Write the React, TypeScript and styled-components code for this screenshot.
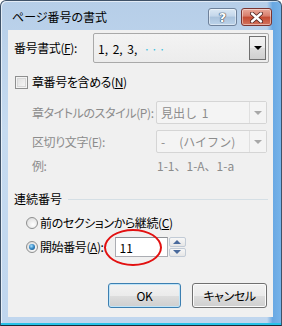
import React from "react";
import styled, { createGlobalStyle } from "styled-components";

const GlobalStyle = createGlobalStyle`
  html, body {
    margin: 0;
    padding: 0;
    background: #ffffff;
  }
  * {
    box-sizing: border-box;
  }
`;

const font = `"Noto Sans CJK JP", "Liberation Sans", sans-serif`;

const Window = styled.div`
  width: 282px;
  height: 326px;
  border: 1px solid #3f5268;
  border-bottom-color: #1c2a38;
  border-radius: 6px 6px 0 0;
  background:
    linear-gradient(to right, rgba(255, 255, 255, 0) 0%, rgba(255, 255, 255, 0) 95%, rgba(90, 160, 225, 0.85) 97%, rgba(110, 175, 232, 0.9) 100%),
    linear-gradient(to bottom, #b6cee8 0%, #c6dbf0 40%, #c0d6ee 100%);
  box-shadow: inset 0 -2px 0 #27c2e8, inset 1px 1px 0 rgba(255, 255, 255, 0.6);
  display: flex;
  flex-direction: column;
  font-family: ${font};
  overflow: hidden;
`;

const TitleBar = styled.div`
  height: 29px;
  display: flex;
  align-items: flex-start;
  padding: 6px 9px 0 11px;
`;

const Title = styled.div`
  flex: 1;
  font-size: 12px;
  line-height: 18px;
  color: #000;
  margin-top: 1px;
  font-feature-settings: "palt";
`;

const CaptionButtons = styled.div`
  display: flex;
  gap: 4px;
  margin-top: 1px;
`;

const CaptionButton = styled.div<{ $kind: "help" | "close" }>`
  width: ${({ $kind }) => ($kind === "help" ? "29px" : "31px")};
  height: 18px;
  border-radius: 3px;
  border: 1px solid ${({ $kind }) => ($kind === "help" ? "#6e819a" : "#7a3430")};
  background: ${({ $kind }) =>
    $kind === "help"
      ? "linear-gradient(#dce8f4 0%, #c3d6ea 45%, #a9c2dc 50%, #bcd3ea 100%)"
      : "linear-gradient(#e9a99b 0%, #d77d6b 45%, #c44a32 50%, #d3735c 100%)"};
  box-shadow: inset 0 0 0 1px rgba(255, 255, 255, 0.45);
  display: flex;
  align-items: center;
  justify-content: center;
  color: #fff;
  font-family: "DejaVu Sans", sans-serif;
  font-weight: bold;
  font-size: 13px;
  text-shadow: 0 0 1px #2d3d52, 0 0 1px #2d3d52, 0 0 1px #2d3d52;
`;

const Client = styled.div`
  flex: 1;
  margin: 0 8px 0 7px;
  background: #f0f0f0;
  display: flex;
  flex-direction: column;
  padding: 3px 0 0 6px;
  font-size: 12px;
  color: #000;
`;

const BottomFrame = styled.div`
  height: 8px;
`;

const Row = styled.div<{ $h: number; $mt: number; $indent?: number; $mr?: number }>`
  display: flex;
  align-items: center;
  height: ${({ $h }) => $h}px;
  margin-top: ${({ $mt }) => $mt}px;
  padding-left: ${({ $indent }) => $indent ?? 0}px;
  padding-right: ${({ $mr }) => $mr ?? 0}px;
  position: relative;
`;

const Label = styled.span<{ $w?: number; $disabled?: boolean; $plain?: boolean }>`
  width: ${({ $w }) => ($w ? `${$w}px` : "auto")};
  flex: none;
  color: ${({ $disabled }) => ($disabled ? "#8c8c8c" : "#000")};
  line-height: 16px;
  white-space: nowrap;
  font-feature-settings: ${({ $plain }) => ($plain ? "normal" : '"palt"')};
  letter-spacing: ${({ $plain }) => ($plain ? "0" : "-0.4px")};
`;

const Key = styled.span`
  text-decoration: underline;
  text-underline-offset: 1px;
`;

const Combo = styled.div<{ $disabled?: boolean }>`
  flex: 1;
  height: 100%;
  display: flex;
  align-items: stretch;
  border: 1px solid ${({ $disabled }) => ($disabled ? "#d5d5d5" : "#a9a9a9")};
  border-radius: 2px;
  background: ${({ $disabled }) =>
    $disabled ? "#f4f4f4" : "linear-gradient(#f3f3f3, #ececec)"};
  padding: ${({ $disabled }) => ($disabled ? "0" : "2px")};
`;

const ComboText = styled.div<{ $disabled?: boolean }>`
  flex: 1;
  display: flex;
  align-items: center;
  padding-left: ${({ $disabled }) => ($disabled ? "4px" : "2px")};
  color: ${({ $disabled }) => ($disabled ? "#8c8c8c" : "#000")};
  white-space: pre;
  word-spacing: 2px;
`;

const Dots = styled.span`
  color: #39c0e0;
  margin-left: 6px;
  letter-spacing: 1px;
`;

const DropButton = styled.div<{ $disabled?: boolean }>`
  width: 17px;
  display: flex;
  align-items: center;
  justify-content: center;
  border: 1px solid ${({ $disabled }) => ($disabled ? "#e0e0e0" : "#707070")};
  border-width: ${({ $disabled }) => ($disabled ? "0 0 0 1px" : "1px")};
  background: ${({ $disabled }) =>
    $disabled ? "#f4f4f4" : "linear-gradient(#f2f2f2 0%, #ebebeb 50%, #dddddd 51%, #cfcfcf 100%)"};
`;

const Arrow = styled.span<{ $disabled?: boolean; $up?: boolean; $color?: string }>`
  width: 0;
  height: 0;
  border-left: 4px solid transparent;
  border-right: 4px solid transparent;
  ${({ $up, $disabled, $color }) =>
    $up
      ? `border-bottom: 4px solid ${$color ?? "#000"};`
      : `border-top: 4px solid ${$color ?? ($disabled ? "#a8a8a8" : "#000")};`}
`;

const Checkbox = styled.span`
  width: 13px;
  height: 13px;
  margin: 0 4px 0 1px;
  border: 1px solid #8e8f8f;
  background: linear-gradient(135deg, #dcdcdc, #fafafa);
  box-shadow: inset 0 0 0 1px #f4f4f4, inset 0 0 0 2px #d8d8d8;
  flex: none;
`;

const Radio = styled.span<{ $checked?: boolean }>`
  width: 12px;
  height: 12px;
  margin: 0 2px 0 12px;
  border-radius: 50%;
  border: 1px solid #8e8f8f;
  background: radial-gradient(circle at 60% 65%, #ffffff, #d6d6d6);
  display: flex;
  align-items: center;
  justify-content: center;
  flex: none;

  &::after {
    content: "";
    display: ${({ $checked }) => ($checked ? "block" : "none")};
    width: 6px;
    height: 6px;
    border-radius: 50%;
    background: radial-gradient(circle at 40% 35%, #a9e2ff 0%, #3a8cc8 45%, #0b3e6e 100%);
  }
`;

const GroupTitle = styled.span`
  line-height: 16px;
  color: #000;
  flex: none;
`;

const GroupLine = styled.span`
  flex: 1;
  height: 1px;
  margin: 0 5px 0 6px;
  background: #d5dfe5;
`;

const SpinField = styled.div`
  margin-left: 11px;
  display: flex;
  height: 100%;
  position: relative;
`;

const NumberInput = styled.div`
  width: 53px;
  height: 100%;
  border: 1px solid #abadb3;
  border-top-color: #8e9196;
  background: #fff;
  padding-left: 4px;
  display: flex;
  align-items: center;
`;

const Spin = styled.div`
  width: 17px;
  margin-left: 1px;
  display: flex;
  flex-direction: column;
  gap: 1px;
`;

const SpinButton = styled.div`
  flex: 1;
  border: 1px solid #c2cbd6;
  border-radius: 2px;
  background: linear-gradient(#f7f7f7, #e6e6e6);
  display: flex;
  align-items: center;
  justify-content: center;
`;

const Highlight = styled.span`
  position: absolute;
  left: -11px;
  top: -8px;
  width: 58px;
  height: 37px;
  border: 2px solid #e21010;
  border-radius: 50%;
  pointer-events: none;
`;

const ButtonRow = styled.div`
  display: flex;
  justify-content: flex-end;
  gap: 11px;
  margin-top: 26px;
  padding-right: 6px;
  height: 25px;
`;

const DialogButton = styled.div<{ $default?: boolean; $w: number }>`
  width: ${({ $w }) => $w}px;
  height: 25px;
  border-radius: 3px;
  border: 1px solid ${({ $default }) => ($default ? "#3c7fb1" : "#707070")};
  background: linear-gradient(#f2f2f2 0%, #ebebeb 50%, #dddddd 51%, #cfcfcf 100%);
  box-shadow: inset 0 0 0 1px ${({ $default }) => ($default ? "#bfe4f8" : "#fbfbfb")};
  display: flex;
  align-items: center;
  justify-content: center;
  color: #000;
  line-height: 16px;
  font-feature-settings: "palt";
  letter-spacing: -0.4px;
`;

export default function App() {
  return (
    <>
      <GlobalStyle />
      <Window>
        <TitleBar>
          <Title>ページ番号の書式</Title>
          <CaptionButtons>
            <CaptionButton $kind="help">?</CaptionButton>
            <CaptionButton $kind="close">
              <svg width="13" height="11" viewBox="0 0 13 11">
                <path
                  d="M2 1.5 L11 9.5 M11 1.5 L2 9.5"
                  stroke="#4a1e1a"
                  strokeWidth="4"
                  strokeLinecap="round"
                />
                <path
                  d="M2 1.5 L11 9.5 M11 1.5 L2 9.5"
                  stroke="#ffffff"
                  strokeWidth="2.4"
                  strokeLinecap="round"
                />
              </svg>
            </CaptionButton>
          </CaptionButtons>
        </TitleBar>

        <Client>
          <Row $h={30} $mt={0} $mr={4}>
            <Label $w={79}>
              番号書式(<Key>F</Key>):
            </Label>
            <Combo>
              <ComboText>
                1, 2, 3,<Dots>···</Dots>
              </ComboText>
              <DropButton>
                <Arrow />
              </DropButton>
            </Combo>
          </Row>

          <Row $h={18} $mt={10}>
            <Checkbox />
            <Label>
              章番号を含める(<Key>N</Key>)
            </Label>
          </Row>

          <Row $h={23} $mt={10} $indent={18} $mr={6}>
            <Label $w={124} $disabled>
              章タイトルのスタイル(P):
            </Label>
            <Combo $disabled>
              <ComboText $disabled>見出し 1</ComboText>
              <DropButton $disabled>
                <Arrow $disabled />
              </DropButton>
            </Combo>
          </Row>

          <Row $h={23} $mt={6} $indent={18} $mr={6}>
            <Label $w={124} $disabled>
              区切り文字(E):
            </Label>
            <Combo $disabled>
              <ComboText $disabled>-   (ハイフン)</ComboText>
              <DropButton $disabled>
                <Arrow $disabled />
              </DropButton>
            </Combo>
          </Row>

          <Row $h={16} $mt={5} $indent={18}>
            <Label $w={125} $disabled>
              例:
            </Label>
            <Label $disabled $plain>
              1-1、1-A、1-a
            </Label>
          </Row>

          <Row $h={16} $mt={17}>
            <GroupTitle>連続番号</GroupTitle>
            <GroupLine />
          </Row>

          <Row $h={16} $mt={8}>
            <Radio />
            <Label>
              前のセクションから継続(<Key>C</Key>)
            </Label>
          </Row>

          <Row $h={20} $mt={6}>
            <Radio $checked />
            <Label>
              開始番号(<Key>A</Key>):
            </Label>
            <SpinField>
              <NumberInput>11</NumberInput>
              <Spin>
                <SpinButton>
                  <Arrow $up $color="#4a6a9c" />
                </SpinButton>
                <SpinButton>
                  <Arrow $color="#4a6a9c" />
                </SpinButton>
              </Spin>
              <Highlight />
            </SpinField>
          </Row>

          <ButtonRow>
            <DialogButton $default $w={73}>
              OK
            </DialogButton>
            <DialogButton $w={75}>キャンセル</DialogButton>
          </ButtonRow>
        </Client>
        <BottomFrame />
      </Window>
    </>
  );
}
